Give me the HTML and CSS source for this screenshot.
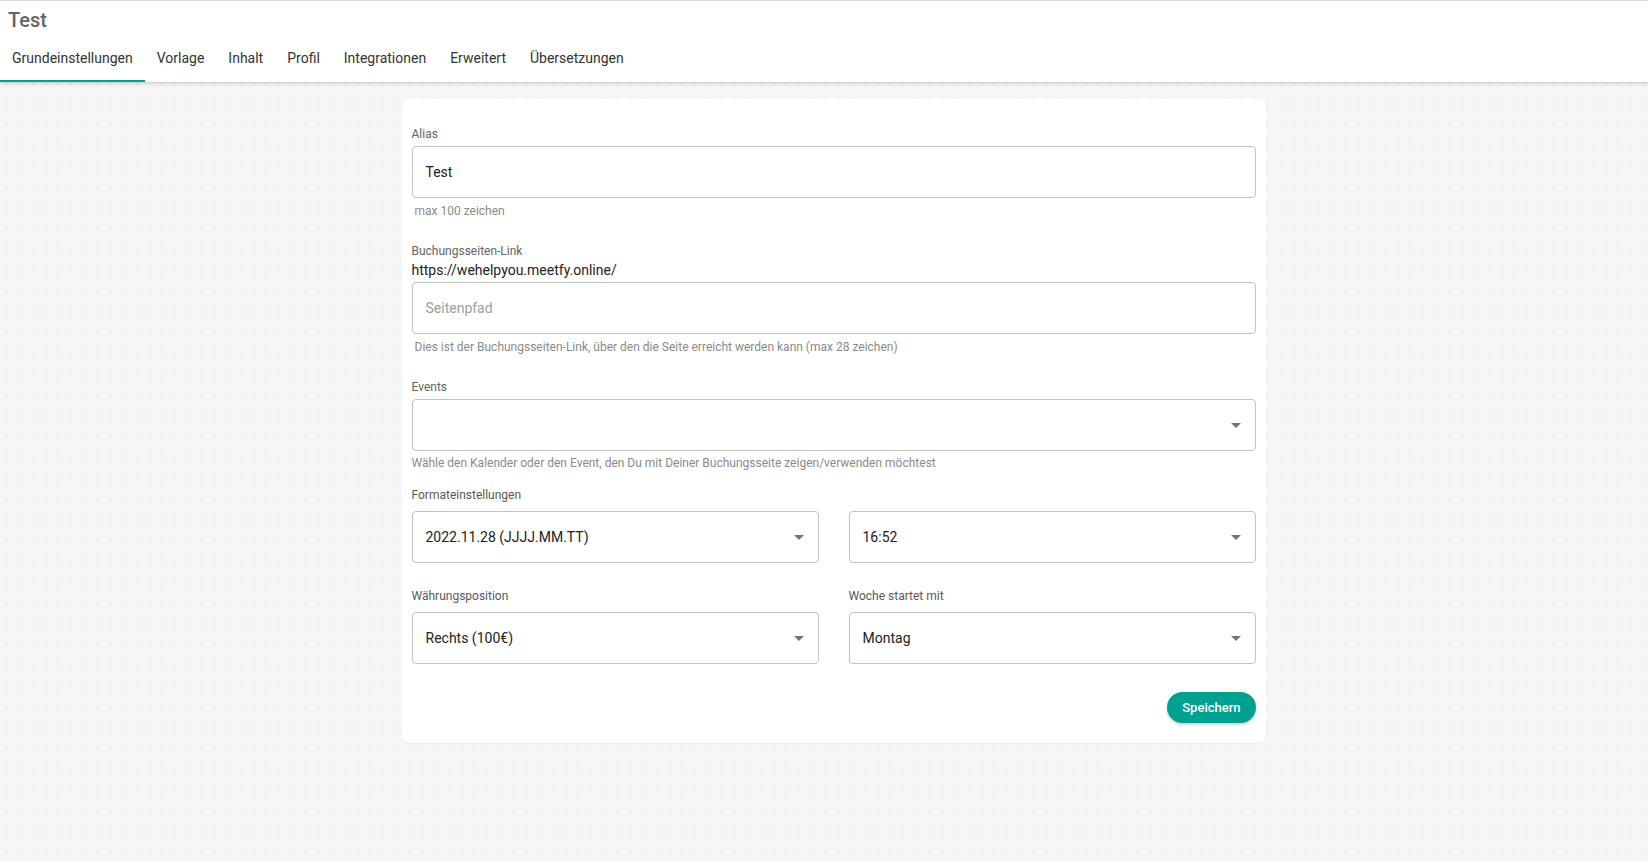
FILE: index.html
```html
<!DOCTYPE html>
<html lang="de">
<head>
<meta charset="utf-8">
<title>Test</title>
<link rel="stylesheet" href="styles.css">
</head>
<body>
<header class="topbar">
  <h1 class="page-title">Test</h1>
  <nav class="tabs">
    <a class="tab active">Grundeinstellungen</a>
    <a class="tab">Vorlage</a>
    <a class="tab">Inhalt</a>
    <a class="tab">Profil</a>
    <a class="tab">Integrationen</a>
    <a class="tab">Erweitert</a>
    <a class="tab">Übersetzungen</a>
  </nav>
</header>
<main class="main">
  <section class="card">
    <div class="field">
      <div class="field-label">Alias</div>
      <div class="input"><span class="value">Test</span></div>
      <div class="hint indent">max 100 zeichen</div>
    </div>

    <div class="field gap">
      <div class="field-label tight">Buchungsseiten-Link</div>
      <div class="url">https://wehelpyou.meetfy.online/</div>
      <div class="input"><span class="placeholder">Seitenpfad</span></div>
      <div class="hint indent">Dies ist der Buchungsseiten-Link, über den die Seite erreicht werden kann (max 28 zeichen)</div>
    </div>

    <div class="field gap">
      <div class="field-label">Events</div>
      <div class="input select"><span class="value"></span><span class="arrow"></span></div>
      <div class="hint near">Wähle den Kalender oder den Event, den Du mit Deiner Buchungsseite zeigen/verwenden möchtest</div>
    </div>

    <div class="grid first">
      <div class="col">
        <div class="field-label wide">Formateinstellungen</div>
        <div class="input select"><span class="value">2022.11.28 (JJJJ.MM.TT)</span><span class="arrow"></span></div>
      </div>
      <div class="col">
        <div class="field-label wide">&nbsp;</div>
        <div class="input select"><span class="value">16:52</span><span class="arrow"></span></div>
      </div>
    </div>

    <div class="grid row-gap">
      <div class="col">
        <div class="field-label wide">Währungsposition</div>
        <div class="input select"><span class="value">Rechts (100€)</span><span class="arrow"></span></div>
      </div>
      <div class="col">
        <div class="field-label wide">Woche startet mit</div>
        <div class="input select"><span class="value">Montag</span><span class="arrow"></span></div>
      </div>
    </div>

    <div class="actions">
      <button class="btn">Speichern</button>
    </div>
  </section>
</main>
</body>
</html>
```

FILE: styles.css
```css
* { box-sizing: border-box; }

html, body { height: 100%; }

body {
  margin: 0;
  font-family: Roboto, "Noto Sans", Arial, sans-serif;
  color: #222;
  background-color: #f6f6f6;
  background-image: radial-gradient(circle, #ebebeb 0.9px, transparent 1.3px);
  background-size: 13px 13px;
  background-position: 0px 0px;
}

.topbar {
  background: #fff;
  height: 82px;
  border-top: 1px solid #dcdcdc;
  box-shadow: 0 2px 4px rgba(0, 0, 0, 0.12), 0 1px 1px rgba(0, 0, 0, 0.06);
  position: relative;
}

.page-title {
  margin: 0;
  padding: 5px 0 0 8px;
  height: 33px;
  font-size: 20px;
  line-height: 28px;
  font-weight: 500;
  color: #646464;
}

.tabs {
  display: flex;
  height: 48px;
}

.tab {
  display: flex;
  align-items: center;
  padding: 0 12px;
  font-size: 14px;
  color: #333;
  border-bottom: 2px solid transparent;
  padding-top: 2px;
  cursor: pointer;
}

.tab.active {
  border-bottom-color: #00a191;
}

.main {
  padding: 17px 0 40px 19px;
}

.card {
  width: 864px;
  margin: 0 auto;
  background: #fff;
  border-radius: 8px;
  padding: 26px 10px 20px 10px;
  box-shadow: 0 1px 2px rgba(0, 0, 0, 0.04);
}

.field-label {
  font-size: 12px;
  line-height: 16px;
  padding-top: 1px;
  color: #646464;
  margin-bottom: 4px;
}

.field-label.tight { margin-bottom: 0; }
.field-label.wide { margin-bottom: 8px; color: #595959; }

.url {
  font-size: 14px;
  line-height: 20px;
  padding-top: 1px;
  color: #222;
  margin-bottom: 2px;
}

.input {
  height: 52px;
  border: 1px solid #c2c2c2;
  border-radius: 4px;
  display: flex;
  align-items: center;
  padding: 0 14px 0 13px;
  font-size: 14px;
  background: #fff;
}

.value { color: #222; }
.placeholder { color: #9e9e9e; }

.select { justify-content: space-between; }

.arrow {
  width: 0;
  height: 0;
  border-left: 5px solid transparent;
  border-right: 5px solid transparent;
  border-top: 5px solid #757575;
}

.hint {
  font-size: 12px;
  line-height: 16px;
  color: #8a8a8a;
  margin-top: 5px;
}

.hint.indent { padding-left: 3px; }
.hint.near { margin-top: 4px; }

.gap { margin-top: 23px; }

.grid {
  display: grid;
  grid-template-columns: 407px 407px;
  column-gap: 30px;
}

.grid.first { margin-top: 15px; }
.grid.row-gap { margin-top: 24px; }

.actions {
  display: flex;
  justify-content: flex-end;
  margin-top: 28px;
}

.btn {
  height: 31px;
  padding: 0 15px;
  border: none;
  border-radius: 16px;
  background: #00a191;
  color: #fff;
  font-family: Roboto, "Noto Sans", Arial, sans-serif;
  font-size: 13px;
  font-weight: 500;
  box-shadow: 0 2px 3px rgba(0, 0, 0, 0.18);
  cursor: pointer;
}
```
